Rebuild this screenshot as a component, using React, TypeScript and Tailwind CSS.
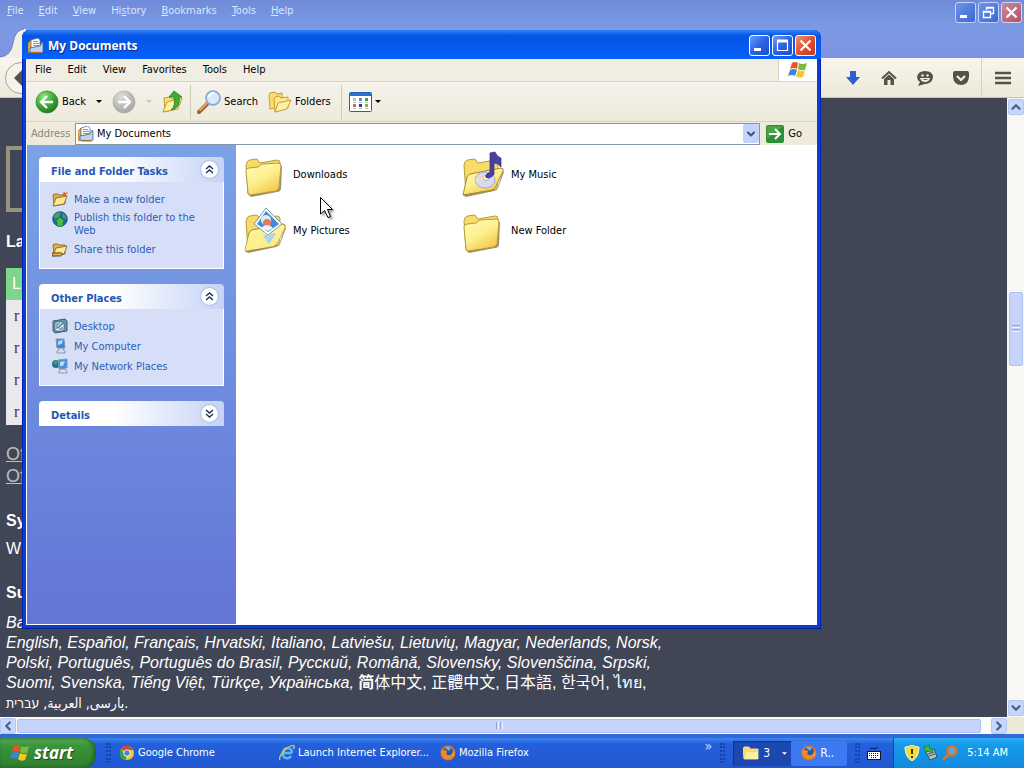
import React from 'react';
import { ChevronDown, ChevronLeft, ChevronRight, ChevronUp } from 'lucide-react';

const FolderShape: React.FC<{ open?: boolean }> = ({ open }) => (
  <>
    {open ? (
      <path d="M5 44 L8 43 L39 38 L45 20 L46 21 L40 37 Q39 39 36 40 L8 46Z" fill="#6f6030" opacity="0.7" />
    ) : (
      <path d="M8 43 L39 38 L40 14 L42 15 L41 38 Q40 41 37 41 L11 46Z" fill="#6f6030" opacity="0.7" />
    )}
    <path d="M6 14 L7 11 Q8 9 10 9 L16 8 Q18 8 19 11 L20 12 L37 9 Q40 9 40 12 L39 38 L8 43 Z" fill="#f8dc6a" stroke="#b99a3a" />
    {open ? (
      <path d="M5 44 L9 26 Q10 24 12 23 L43 17 Q46 17 45 20 L38 35 Q37 38 34 39 Z" fill="url(#folderFront)" stroke="#a88a2c" />
    ) : (
      <path d="M6 20 Q6 17 9 17 L18 16 L22 13 L38 12 Q41 12 41 15 L39 37 Q38 39 36 40 L10 44 Q8 44 8 42 Z" fill="url(#folderFront)" stroke="#b99a3a" />
    )}
  </>
);

const FolderIcon: React.FC<{ kind: string }> = ({ kind }) => (
  <svg viewBox="0 0 48 48" className="size-12 shrink-0">
    <defs>
      <linearGradient id="folderFront" x1="0" y1="0" x2="0.6" y2="1">
        <stop offset="0" stopColor="#fffab8" />
        <stop offset="0.55" stopColor="#fdf090" />
        <stop offset="1" stopColor="#f1c94c" />
      </linearGradient>
    </defs>
    <FolderShape open={kind !== 'plain'} />
    {kind === 'music' && (
      <>
        <ellipse cx="27" cy="29" rx="10" ry="8" fill="#d7daf0" stroke="#a8acd0" />
        <ellipse cx="28" cy="27" rx="3" ry="2.5" fill="#fbfbff" stroke="#a8acd0" />
        <path d="M14 29 L42 20 L40 23 L20 31Z" fill="#f9e884" opacity="0.6" />
        <path d="M32 22 V2 L37 1 Q39 6 43 7 V16 Q40 12 36 12 V23 Q35 26 30 27 Q27 27 28 24 Q30 21 32 22Z" fill="#4a41a0" stroke="#302878" strokeWidth="0.7" />
      </>
    )}
    {kind === 'pictures' && (
      <>
        <path d="M26 1 L42 17 L28 28 L14 17Z" fill="#fff" stroke="#7795ad" />
        <path d="M26 4 L39 17 L28 25 L17 17Z" fill="#3f8fd0" />
        <circle cx="26" cy="13" r="5" fill="#e5ecf4" />
        <circle cx="27" cy="16" r="4" fill="#df7c62" />
        <path d="M21 21 Q27 15 33 21 L28 24Z" fill="#f0f2f6" />
        <path d="M5 44 L9 28 L24 25 L29 30 L39 22 L45 20 L38 35 L34 39Z" fill="#fdf090" opacity="0.9" />
        <path d="M23 29 Q26 26 29 29 Q33 24 36 27 L29 37Z" fill="#a9d6ec" />
      </>
    )}
  </svg>
);

const DocumentsIcon: React.FC = () => (
  <svg viewBox="0 0 16 16" className="size-4 shrink-0">
    <path d="M0 5 L3 2 V13 L1 15 Q0 15 0 13Z" fill="#f4b33e" stroke="#a05c1c" strokeWidth="0.7" />
    <path d="M3 2 L10 0 L12 2 V10 H3Z" fill="#fff" stroke="#56769f" strokeWidth="0.8" />
    <path d="M5 3.500 H10 M5 5.500 H11 M5 7.500 H11" stroke="#6a9ade" />
    <path d="M2 10 L12 8 L14 4 Q15 4 15 6 V13 Q15 15 13 15 H4 Q2 15 2 13Z" fill="#bcd4f4" stroke="#4a607e" strokeWidth="0.8" />
    <path d="M3 14.500 H13" stroke="#b56f24" strokeWidth="1.2" />
  </svg>
);

const WindowsFlag: React.FC<{ className: string }> = ({ className }) => (
  <svg viewBox="0 0 20 18" className={className}>
    <path d="M4 2 Q7 0 10 2 L9 8 Q6 6 2 8Z" fill="#e8542c" />
    <path d="M11 2 Q14 4 19 2 L17 9 Q13 10 10 8Z" fill="#7dbb3c" />
    <path d="M2 9 Q6 7 9 9 L7 15 Q4 13 0 15Z" fill="#3e83e0" />
    <path d="M10 9 Q13 11 17 10 L15 16 Q11 18 8 15Z" fill="#f7c52c" />
  </svg>
);

const RoundArrow: React.FC<{ back?: boolean }> = ({ back }) => (
  <svg viewBox="0 0 24 24" className="size-6 shrink-0">
    <defs>
      <radialGradient id="greenBall" cx="0.35" cy="0.25" r="0.8">
        <stop offset="0" stopColor="#8fe07c" />
        <stop offset="0.6" stopColor="#3aa535" />
        <stop offset="1" stopColor="#20761f" />
      </radialGradient>
      <radialGradient id="grayBall" cx="0.35" cy="0.25" r="0.8">
        <stop offset="0" stopColor="#dcdcda" />
        <stop offset="1" stopColor="#a5a5a2" />
      </radialGradient>
    </defs>
    {back ? (
      <>
        <circle cx="12" cy="12" r="11" fill="url(#greenBall)" stroke="#2c8a2a" strokeWidth="0.7" />
        <path d="M18 12 H7 M12 6 L6 12 L12 18" fill="none" stroke="#fff" strokeWidth="2.4" />
      </>
    ) : (
      <>
        <circle cx="12" cy="12" r="11" fill="url(#grayBall)" stroke="#a9a9a6" strokeWidth="0.7" />
        <path d="M6 12 H17 M12 6 L18 12 L12 18" fill="none" stroke="#fff" strokeWidth="2.4" />
      </>
    )}
  </svg>
);

const Caret: React.FC<{ className: string }> = ({ className }) => (
  <svg viewBox="0 0 6 3" className={className}>
    <path d="M0 0 H6 L3 3Z" fill="currentColor" />
  </svg>
);

const UpFolderIcon: React.FC = () => (
  <svg viewBox="0 0 22 24" className="h-6 w-[22px] shrink-0">
    <path d="M2 8 L8 7 L10 9 L16 8 V18 L3 22Z" fill="#f7df72" stroke="#c59c31" />
    <path d="M1 22 L5 12 L20 8 L16 19Z" fill="#fdf2a0" stroke="#c59c31" />
    <path d="M9 20 Q14 16 12 7 H7 L12 1 L20 7 L17 7 Q19 18 9 20Z" fill="#3fae35" stroke="#1d7a22" strokeWidth="0.8" />
  </svg>
);

const SearchIcon: React.FC = () => (
  <svg viewBox="0 0 24 24" className="size-6 shrink-0">
    <path d="M10 14 L2 22" stroke="#9b6235" strokeWidth="4" strokeLinecap="round" />
    <path d="M10 13 L3 20" stroke="#e6a266" strokeWidth="2" strokeLinecap="round" />
    <circle cx="16" cy="8" r="7" fill="#d4eafd" stroke="#8aa7d8" strokeWidth="1.7" />
    <path d="M12 7 Q13 3 17 3" stroke="#fff" strokeWidth="2" fill="none" />
  </svg>
);

const FoldersIcon: React.FC = () => (
  <svg viewBox="0 0 24 24" className="size-6 shrink-0">
    <path d="M1 5 L2 3 L7 2 L9 4 L14 3 V16 L2 19Z" fill="#f8dd72" stroke="#cf9c2e" />
    <path d="M6 9 L7 7 L11 6 L13 8 L20 7 V18 L7 22Z" fill="#fbe98b" stroke="#cf9c2e" />
    <path d="M7 22 L10 13 L23 10 L19 19Z" fill="#fdf3a8" stroke="#cf9c2e" />
  </svg>
);

const ViewsIcon: React.FC = () => (
  <svg viewBox="0 0 23 20" className="h-5 w-[23px] shrink-0">
    <rect x="0.5" y="0.5" width="22" height="19" rx="1" fill="#fff" stroke="#1c62c0" />
    <rect x="1" y="1" width="21" height="3" fill="#2a70d4" />
    <rect x="4" y="6" width="3" height="3" fill="#aac0dc" />
    <rect x="10" y="6" width="3" height="3" fill="#5b8cc8" />
    <rect x="16" y="6" width="3" height="3" fill="#3c9a4a" />
    <rect x="4" y="12" width="3" height="3" fill="#d7654c" />
    <rect x="10" y="12" width="3" height="3" fill="#27409c" />
    <rect x="16" y="12" width="3" height="3" fill="#a9a632" />
    <path d="M4 10.500h3M10 10.500h3M16 10.500h3M4 16.500h3M10 16.500h3M16 16.500h3" stroke="#b5c0d2" />
  </svg>
);

const TaskIcon: React.FC<{ kind: string }> = ({ kind }) => (
  <svg viewBox="0 0 16 16" className="size-4 shrink-0">
    {(kind === 'new' || kind === 'share') && (
      <>
        <path d="M1 4 L2 3 H6 L7 4 H13 V13 L2 15Z" fill="#e3b043" stroke="#80601f" strokeWidth="0.8" />
        <path d="M1 15 L4 7 L15 5 L12 13Z" fill="#fcea94" stroke="#80601f" strokeWidth="0.8" />
      </>
    )}
    {kind === 'new' && <path d="M12 0 L13 2 L16 1 L14 4 L15 6 L12 4 L9 4 L11 3Z" fill="#e8622c" />}
    {kind === 'share' && <path d="M0 12 H5 Q7 11 9 12 L11 13 Q9 16 5 15 H0Z" fill="#e0aa58" stroke="#3b3320" strokeWidth="0.8" />}
    {kind === 'web' && (
      <>
        <circle cx="8" cy="8" r="7.500" fill="#23629c" stroke="#1f4f78" strokeWidth="0.5" />
        <path d="M2 5 Q5 0 9 2 L7 6 L3 8Z M10 2 Q14 4 14 8 L11 7Z" fill="#45a851" />
        <path d="M8 6 L13 11 H11 V15 H5 V11 H3Z" fill="#43c03c" stroke="#1d7a2c" strokeWidth="0.7" />
      </>
    )}
    {kind === 'desktop' && (
      <>
        <path d="M1 3 L13 1 L15 3 V13 L3 15 L1 13Z" fill="#6c97a8" stroke="#2c5064" strokeWidth="0.9" />
        <rect x="3" y="4" width="9" height="9" rx="2" fill="#eaf5fa" stroke="#2f6376" strokeWidth="0.8" />
        <path d="M5 11 V6 H8 M6 10 L11 5 M7 11 H10 V9" stroke="#2e6b88" strokeWidth="1.1" fill="none" />
      </>
    )}
    {kind === 'computer' && (
      <>
        <path d="M4 1 L12 1 L13 10 L5 10Z" fill="#3b86dc" stroke="#8199b8" />
        <path d="M6 3 L11 2 L10 6 L6 7Z" fill="#a8dcfc" />
        <path d="M7 10h4v2l2 1v2H5v-2l2-1Z" fill="#dadfe4" stroke="#6b7d94" strokeWidth="0.7" />
      </>
    )}
    {kind === 'network' && (
      <>
        <circle cx="4" cy="6" r="4" fill="#226ca4" />
        <path d="M1 5 Q3 1 6 3 L4 7Z" fill="#41a84c" />
        <path d="M6 2 L15 1 V10 L7 11Z" fill="#4292e2" stroke="#8199b8" />
        <path d="M8 4 L13 3 L11 8 L8 8Z" fill="#b4e0fc" />
        <path d="M9 11h3l3 2v2H7v-2Z" fill="#dadfe4" stroke="#6b7d94" strokeWidth="0.7" />
      </>
    )}
  </svg>
);

const FirefoxIcon: React.FC = () => (
  <svg viewBox="0 0 16 16" className="size-4 shrink-0">
    <circle cx="8" cy="8" r="7.500" fill="#e6701c" />
    <circle cx="8" cy="7" r="5" fill="#2458a0" />
    <path d="M5 3 Q8 0 11 3 L9 6Z" fill="#62b4e4" />
    <path d="M1 4 Q2 6 4 5 Q7 5 7 7 Q5 9 8 10 Q12 11 13 6 Q15 12 9 14 Q2 14 1 8Z" fill="#f08a24" />
    <path d="M13 4 Q16 9 12 13 Q15 8 13 4Z" fill="#fbd04a" />
  </svg>
);

const WindowButton: React.FC<{ kind: string; faded?: boolean }> = ({ kind, faded }) => (
  <button
    aria-label={kind}
    className={`size-[21px] shrink-0 rounded-[3px] border flex items-center justify-center ${
      kind === 'Close'
        ? faded
          ? 'border-[#d8d4ec] bg-linear-to-br from-[#c98a9c] to-[#b35064]'
          : 'border-white bg-linear-to-br from-[#ee9079] via-[#e0502c] to-[#c53a18]'
        : faded
          ? 'border-[#c3d2f6] bg-linear-to-br from-[#6f93ea] to-[#3c66d4]'
          : 'border-white bg-linear-to-br from-[#6f9bf5] via-[#2d62e4] to-[#1a4bd0]'
    }`}
  >
    <svg viewBox="0 0 19 19" className="size-[19px]">
      {kind === 'Minimize' && <path d="M4 13.500 H11" stroke="#fff" strokeWidth="3" />}
      {kind === 'Maximize' && <path d="M4 5 H15 M4.500 4 V14.500 H14.500 V4" fill="none" stroke="#fff" strokeWidth="1.2" />}
      {kind === 'Maximize' && <path d="M4 5 H15" stroke="#fff" strokeWidth="3" />}
      {kind === 'Restore' && <path d="M7.500 7 V4.500 H14.500 V10.500 H12 M4.500 8.500 H11.500 V14.500 H4.500Z M4 9 H12 M7 5 H15" fill="none" stroke="#fff" strokeWidth="1.3" />}
      {kind === 'Close' && <path d="M4.500 4.500 L14.500 14.500 M14.500 4.500 L4.500 14.500" stroke="#fff" strokeWidth="2.3" />}
    </svg>
  </button>
);

const scrollButton = 'size-4 shrink-0 rounded-[2px] border border-[#b4c6f2] bg-[#c8d6fb] text-[#4d6185] flex items-center justify-center';

const firefoxMenu = ['File', 'Edit', 'View', 'History', 'Bookmarks', 'Tools', 'Help'];
const explorerMenu = ['File', 'Edit', 'View', 'Favorites', 'Tools', 'Help'];

const files = [
  { name: 'Downloads', kind: 'plain' },
  { name: 'My Music', kind: 'music' },
  { name: 'My Pictures', kind: 'pictures' },
  { name: 'New Folder', kind: 'plain' },
];

const panels = [
  {
    title: 'File and Folder Tasks',
    items: [
      { label: 'Make a new folder', kind: 'new' },
      { label: 'Publish this folder to the Web', kind: 'web' },
      { label: 'Share this folder', kind: 'share' },
    ],
  },
  {
    title: 'Other Places',
    items: [
      { label: 'Desktop', kind: 'desktop' },
      { label: 'My Computer', kind: 'computer' },
      { label: 'My Network Places', kind: 'network' },
    ],
  },
  { title: 'Details', items: [] },
];

const FirefoxWindow: React.FC = () => (
  <div className="flex-1 min-h-0 flex flex-col">
    <header className="h-[58px] shrink-0 flex items-start justify-between bg-linear-to-b from-[#6f8bd9] via-[#7c9ae6] to-[#7f92e2]">
      <div className="self-stretch flex flex-col justify-between">
        <nav className="flex gap-[15px] pl-[7px] pt-1 text-[#d9e6fc]">
          {firefoxMenu.map((item) => (
            <button key={item} className="leading-[13px]">
              {item === 'History' ? (
                <>Hi<u>s</u>tory</>
              ) : (
                <><u>{item[0]}</u>{item.slice(1)}</>
              )}
            </button>
          ))}
        </nav>
        <svg viewBox="0 0 26 30" className="w-[26px] h-[30px]">
          <path d="M0 29 Q11 28 13 15 Q15 2 24 1 H26 V30 H0Z" fill="#f2f0e6" />
          <path d="M0 29 Q11 28 13 15 Q15 2 24 1" fill="none" stroke="#6d82c0" />
        </svg>
      </div>
      <div className="flex gap-0.5 pt-0.5 pr-0.5">
        <WindowButton kind="Minimize" faded />
        <WindowButton kind="Restore" faded />
        <WindowButton kind="Close" faded />
      </div>
    </header>

    <div className="h-10 shrink-0 border-b border-[#c9c5b4] bg-linear-to-b from-[#f7f5ee] to-[#ece9d8] flex items-center justify-between text-[#55524a]">
      <button aria-label="Go back" className="ml-[5px] size-8 rounded-full border border-[#a9a698] bg-[#f5f3ea] flex items-center pl-2">
        <svg viewBox="0 0 12 16" className="w-3 h-4"><path d="M0 8 L8 0 H12 V16 H8Z" fill="#55524a" /></svg>
      </button>
      <div className="flex items-center self-stretch">
        <button aria-label="Downloads" className="w-9 flex justify-center">
          <svg viewBox="0 0 16 16" className="size-4"><path d="M5 1 H11 V7 H15 L8 15 L1 7 H5Z" fill="#2f5fce" /></svg>
        </button>
        <button aria-label="Home" className="w-9 flex justify-center">
          <svg viewBox="0 0 16 16" className="size-4">
            <path d="M1 8.500 L8 2 L15 8.500" fill="none" stroke="#55524a" strokeWidth="2" />
            <path d="M3 9 L8 4.500 L13 9 V15 H9.500 V10 H6.500 V15 H3Z" fill="#55524a" />
          </svg>
        </button>
        <button aria-label="Chat" className="w-9 flex justify-center">
          <svg viewBox="0 0 16 16" className="size-4">
            <path d="M8 1 Q16 1 16 7.500 Q15 14 8 14 L1 16 L3 12 Q0 10 0 7 Q1 1 8 1Z" fill="#55524a" />
            <circle cx="5.500" cy="5.500" r="1.2" fill="#f3f1e6" /><circle cx="10.500" cy="5.500" r="1.2" fill="#f3f1e6" />
            <path d="M3 8 H13 Q12 12 8 12 Q4 12 3 8Z M5 9 H11 Q10 10 8 10Z" fill="#f3f1e6" fillRule="evenodd" />
          </svg>
        </button>
        <button aria-label="Pocket" className="w-9 mr-0.5 flex justify-center">
          <svg viewBox="0 0 16 16" className="size-4">
            <path d="M0 3 Q0 1 2 1 H14 Q16 1 16 3 V7 Q15 15 8 15 Q1 15 0 7Z" fill="#55524a" />
            <path d="M4 6 L8 10 L12 6" fill="none" stroke="#f3f1e6" strokeWidth="2.2" />
          </svg>
        </button>
        <button aria-label="Menu" className="w-[43px] self-stretch border-l border-[#d5d1c2] flex items-center justify-center">
          <svg viewBox="0 0 16 14" className="w-4 h-3.5"><path d="M0 2 H16 M0 7 H16 M0 12 H16" stroke="#55524a" strokeWidth="2.6" /></svg>
        </button>
      </div>
    </div>

    <div className="flex-1 min-h-0 flex">
      <main className="flex-1 min-w-0 overflow-hidden bg-[#414656] pl-1.5 text-base leading-5 text-white font-['Liberation_Sans','Noto_Sans_CJK_SC','Noto_Sans_CJK_KR',sans-serif]">
        <div className="mt-12 w-40 h-[66px] border-4 border-[#97937f]" />
        <h2 className="mt-5 font-bold">La</h2>
        <div className="mt-4 w-40 h-8 bg-[#7dd68c] pl-1.5 leading-8">L</div>
        <ul className="w-40 h-[125px] overflow-hidden bg-[#e9e9ed] pl-2 text-[#5b1f5c] leading-8 font-['Liberation_Serif',serif]">
          <li>r</li>
          <li>r</li>
          <li>r</li>
          <li>r</li>
        </ul>
        <div className="mt-[18px] flex flex-col items-start text-lg leading-[22px] text-[#c3bdb7]">
          <a href="#one" className="underline">Of</a>
          <a href="#two" className="underline">Of</a>
        </div>
        <h2 className="mt-6 font-bold">Sy</h2>
        <p className="mt-2">W</p>
        <h2 className="mt-6 font-bold">Su</h2>
        <p className="mt-2.5 italic">
          Ba<br />
          English, Español, Français, Hrvatski, Italiano, Latviešu, Lietuvių, Magyar, Nederlands, Norsk,<br />
          Polski, Português, Português do Brasil, Русский, Română, Slovensky, Slovenščina, Srpski,<br />
          Suomi, Svenska, Tiếng Việt, Türkçe, Українська, <span className="not-italic"><b>简</b>体中文, 正體中文, 日本語, 한국어, ไทย,</span><br />
          <span className="not-italic text-sm leading-5 font-['DejaVu_Sans_Condensed',sans-serif]">پارسی, العربية, עברית.</span>
        </p>
      </main>
      <div className="w-[17px] shrink-0 bg-[#f7f7f3] flex flex-col items-center py-px">
        <button aria-label="Scroll up" className={scrollButton}><ChevronUp className="size-3.5" strokeWidth={4} /></button>
        <div className="grow-[176] basis-0" />
        <div className="grow-[72] basis-0 w-3.5 rounded-[2px] border border-[#aec0ee] bg-[#c6d3fa] flex flex-col items-center justify-center gap-px">
          <i className="w-2 h-px bg-[#8ea6dc]" />
          <i className="w-2 h-px bg-[#eef3ff]" />
          <i className="w-2 h-px bg-[#8ea6dc]" />
          <i className="w-2 h-px bg-[#eef3ff]" />
        </div>
        <div className="grow-[333] basis-0" />
        <button aria-label="Scroll down" className={scrollButton}><ChevronDown className="size-3.5" strokeWidth={4} /></button>
      </div>
    </div>
    <div className="h-[17px] shrink-0 bg-[#ece9d8] flex">
      <div className="flex-1 bg-[#fbfbf9] flex items-center">
        <button aria-label="Scroll left" className={scrollButton}><ChevronLeft className="size-3.5" strokeWidth={4} /></button>
        <div className="ml-px mr-2.5 flex-1 h-[14px] rounded-[2px] border border-[#aec0ee] bg-[#c6d3fa] flex items-center justify-center gap-px">
          <i className="w-px h-[7px] bg-[#8ea6dc]" />
          <i className="w-px h-[7px] bg-[#eef3ff]" />
          <i className="w-px h-[7px] bg-[#8ea6dc]" />
          <i className="w-px h-[7px] bg-[#eef3ff]" />
        </div>
        <button aria-label="Scroll right" className={scrollButton}><ChevronRight className="size-3.5" strokeWidth={4} /></button>
      </div>
      <div className="w-[17px]" />
    </div>
  </div>
);

const ExplorerWindow: React.FC = () => (
  <section className="absolute left-[22px] top-[30px] right-[203px] bottom-[139px] rounded-t-lg bg-[#0a3fd0] border-b border-[#001c98] px-1 pb-[3px] flex flex-col shadow-[inset_1px_0_0_#0020b8,inset_-1px_0_0_#0020b8]">
    <div className="h-[29px] shrink-0 -mx-1 rounded-t-lg bg-linear-to-b from-[#2e85f8] from-0% via-[#0654e4] via-20% to-[#0560fb] flex items-center pl-1.5 pr-[5px] pt-0.5">
      <DocumentsIcon />
      <h1 className="ml-1 flex-1 text-xs font-bold text-white font-['Open_Sans',sans-serif] [text-shadow:1px_1px_0_#0a2a8c]">My Documents</h1>
      <div className="flex gap-0.5">
        <WindowButton kind="Minimize" />
        <WindowButton kind="Maximize" />
        <WindowButton kind="Close" />
      </div>
    </div>

    <div className="h-[23px] shrink-0 bg-[#f0eee3] border-b border-[#d8d4c4] flex items-center justify-between">
      <nav className="flex gap-4 pl-[9px]">
        {explorerMenu.map((item) => (
          <button key={item}>{item}</button>
        ))}
      </nav>
      <div className="w-[39px] h-full bg-white border-l border-[#d8d4c4] flex items-center justify-center">
        <WindowsFlag className="w-5 h-[18px]" />
      </div>
    </div>

    <div className="h-10 shrink-0 bg-linear-to-b from-[#f4f2ea] to-[#eeebdc] border-b border-[#d8d4c4] flex items-center pl-[9px]">
      <button className="flex items-center gap-[3px]"><RoundArrow back />Back</button>
      <button aria-label="Back history" className="ml-2.5"><Caret className="w-1.5 h-[3px]" /></button>
      <button aria-label="Forward" className="ml-2.5"><RoundArrow /></button>
      <button aria-label="Forward history" className="ml-2.5 text-[#c5c2b8]"><Caret className="w-1.5 h-[3px]" /></button>
      <button aria-label="Up" className="ml-2.5"><UpFolderIcon /></button>
      <div className="ml-1.5 h-[34px] w-px bg-[#cfcbbb]" />
      <button className="ml-1.5 flex items-center gap-[3px]"><SearchIcon />Search</button>
      <button className="ml-2.5 flex items-center gap-[3px]"><FoldersIcon />Folders</button>
      <div className="ml-2.5 h-[34px] w-px bg-[#cfcbbb]" />
      <button aria-label="Views" className="ml-[7px] flex items-center gap-[3px]"><ViewsIcon /><Caret className="w-1.5 h-[3px]" /></button>
    </div>

    <form className="h-[23px] shrink-0 bg-[#eeebdc] flex items-center pl-[5px] pr-[15px]" onSubmit={(e) => e.preventDefault()}>
      <label htmlFor="address" className="w-11 text-[#8a887d]">Address</label>
      <div className="flex-1 h-[22px] bg-white border border-[#8296ac] flex items-center gap-[3px] pl-0.5">
        <DocumentsIcon />
        <input id="address" defaultValue="My Documents" className="flex-1 min-w-0 outline-none" />
        <button type="button" aria-label="Show addresses" className="w-4 h-[19px] rounded-[2px] bg-[#c3d3fb] text-[#3d517c] flex items-center justify-center">
          <ChevronDown className="size-3" strokeWidth={4} />
        </button>
      </div>
      <button className="ml-1.5 flex items-center gap-1">
        <svg viewBox="0 0 18 18" className="size-[18px]">
          <rect width="18" height="18" rx="2" fill="#2d8f35" />
          <path d="M1 1 H17 L1 14Z" fill="#58b354" opacity="0.6" />
          <path d="M3 9 H14 M9 4 L14 9 L9 14" fill="none" stroke="#fff" strokeWidth="2" />
        </svg>
        Go
      </button>
    </form>

    <div className="flex-1 min-h-0 flex bg-white border-l border-b border-white">
      <aside className="w-[209px] shrink-0 bg-linear-to-b from-[#7ba2e7] to-[#6375d6] px-3 pt-3 flex flex-col gap-[15px]">
        {panels.map((panel) => (
          <div key={panel.title}>
            <div className="h-[25px] rounded-t bg-linear-to-r from-white from-40% to-[#c6d3f7] pl-3 pr-1.5 flex items-center justify-between">
              <h2 className="font-bold text-[#2457b4] pt-1">{panel.title}</h2>
              <button aria-label={'Toggle ' + panel.title} className="size-[17px] rounded-full bg-white shadow-[0_0_2px_#7488b8] flex items-center justify-center">
                <svg viewBox="0 0 9 9" className="size-[9px]">
                  {panel.items.length > 0 ? (
                    <path d="M1 4 L4.500 1 L8 4 M1 8 L4.500 5 L8 8" fill="none" stroke="#1c2f60" strokeWidth="1.4" />
                  ) : (
                    <path d="M1 1 L4.500 4 L8 1 M1 5 L4.500 8 L8 5" fill="none" stroke="#1c2f60" strokeWidth="1.4" />
                  )}
                </svg>
              </button>
            </div>
            {panel.items.length > 0 && (
              <ul className="border border-t-0 border-white bg-[#d6dff7] pl-3 pr-5 pt-[9px] pb-[11px] flex flex-col gap-1">
                {panel.items.map((item) => (
                  <li key={item.label} className="flex items-start gap-1.5">
                    <TaskIcon kind={item.kind} />
                    <a href="#task" className="min-h-4 flex items-center leading-[13px] text-[#2c5cb8]">{item.label}</a>
                  </li>
                ))}
              </ul>
            )}
          </div>
        ))}
      </aside>
      <ul className="flex-1 grid grid-cols-[repeat(auto-fill,218px)] content-start gap-y-2 pl-1 pt-1.5">
        {files.map((file) => (
          <li key={file.name} className="flex items-center gap-[5px]">
            <FolderIcon kind={file.kind} />
            <span>{file.name}</span>
          </li>
        ))}
      </ul>
    </div>
  </section>
);

const Grip: React.FC<{ className: string }> = ({ className }) => (
  <div className={`${className} w-[5px] h-5 shrink-0 border-x-2 border-dotted border-[#1743a8]`} />
);

const Taskbar: React.FC = () => (
  <footer className="h-[34px] shrink-0 border-t-4 border-[#3369d6] bg-linear-to-b from-[#3f86f0] from-0% via-[#245fdc] via-20% to-[#2158d2] flex items-center text-white">
    <button className="w-24 h-full shrink-0 rounded-r-xl bg-linear-to-b from-[#5cae5a] from-0% via-[#3b943a] via-25% to-[#2f7f30] flex items-center gap-1 pl-2.5 shadow-[inset_-2px_0_4px_#1d5c20]">
      <WindowsFlag className="w-5 h-[18px]" />
      <span className="text-[17px] leading-6 font-bold italic font-['Open_Sans',sans-serif] [text-shadow:1px_1px_1px_#1b4a1c]">start</span>
    </button>
    <Grip className="ml-2.5" />
    <button className="ml-2 w-[160px] flex items-center gap-[3px]">
      <svg viewBox="0 0 16 16" className="size-4 shrink-0">
        <circle cx="8" cy="8" r="7" fill="#e9c93a" />
        <path d="M8 8 L2 4 Q8 -3 14.500 5 H8Z" fill="#d9432f" />
        <path d="M2 4 L7 12 L7 15 Q-2 13 2 4Z" fill="#3f9e4b" />
        <circle cx="8" cy="8" r="3.500" fill="#fff" />
        <circle cx="8" cy="8" r="2.700" fill="#4482e0" />
      </svg>
      Google Chrome
    </button>
    <button className="w-[161px] flex items-center gap-[3px] whitespace-nowrap">
      <svg viewBox="0 0 16 16" className="size-4 shrink-0">
        <path d="M13 8 H4 M12 11 Q10 14 7 13 Q3 12 4 7 Q5 3 9 3 Q13 4 13 8" fill="none" stroke="#58b8f4" strokeWidth="2.4" />
        <path d="M1 15 Q-1 12 6 5 Q13 -1 15 1 Q16 2 14 4" fill="none" stroke="#f0cc48" strokeWidth="1.2" />
      </svg>
      Launch Internet Explorer...
    </button>
    <button className="flex items-center gap-[3px]"><FirefoxIcon />Mozilla Firefox</button>
    <button aria-label="More shortcuts" className="ml-auto mr-2 self-start text-sm leading-4 text-[#c8dcfc]">»</button>
    <Grip className="mr-2" />
    <button className="w-[58px] h-[25px] bg-[#1c48b0] shadow-[inset_1px_1px_1px_#12338a] flex items-center pl-2.5">
      <svg viewBox="0 0 16 14" className="w-4 h-3.5"><path d="M0 3 L1 1 H6 L7 3 H15 V13 H1Z" fill="#f8d868" stroke="#fff2b0" strokeWidth="0.8" /><path d="M3 6 H15 V13 H2Z" fill="#fdf09c" /></svg>
      <span className="ml-1 text-xs">3</span>
      <Caret className="ml-auto mr-1 w-[5px] h-[3px]" />
    </button>
    <button className="w-14 h-[25px] rounded-[2px] bg-[#3b7af0] flex items-center gap-[3px] pl-2.5"><FirefoxIcon /><span className="text-xs">R..</span></button>
    <Grip className="ml-2" />
    <button aria-label="Keyboard" className="ml-[7px]">
      <svg viewBox="0 0 14 14" className="size-3.5">
        <path d="M3 3 Q6 1 7 3 Q9 3 11 1" fill="none" stroke="#101828" />
        <rect x="0.500" y="5.500" width="13" height="8" fill="#fff" stroke="#101828" />
        <path d="M2 7.500 H12 M2 9.500 H12 M4 11.500 H10" stroke="#101828" strokeDasharray="1 1" />
      </svg>
    </button>
    <div className="ml-3 h-full border-l border-[#0c48a8] bg-linear-to-b from-[#2fb0f6] from-0% via-[#159bea] via-20% to-[#1289dc] flex items-center gap-[3px] pl-2.5 pr-4">
      <svg viewBox="0 0 16 16" className="size-4">
        <path d="M8 0 Q11 2 15 2 Q15 12 8 16 Q1 12 1 2 Q5 2 8 0Z" fill="#f5dc38" stroke="#f5f5e0" />
        <path d="M8 4 V9 M8 11 V13" stroke="#3c3410" strokeWidth="2" />
      </svg>
      <svg viewBox="0 0 16 16" className="size-4">
        <path d="M3 7 L11 4 L14 12 L7 15Z" fill="#b9c4cc" stroke="#3f4d58" />
        <path d="M5 9 L11 7 M6 11 L12 9" stroke="#3f4d58" />
        <path d="M1 2 L7 0 L6 3 Q10 4 10 8 L4 6 L3 8Z" fill="#46b93c" stroke="#21702a" strokeWidth="0.6" />
      </svg>
      <svg viewBox="0 0 16 16" className="size-4">
        <circle cx="10" cy="6" r="4.500" fill="#58a8dc" stroke="#e8701c" strokeWidth="2.500" />
        <path d="M6 10 L1 15" stroke="#e8701c" strokeWidth="2.600" />
      </svg>
      <time className="ml-1.5 whitespace-nowrap">5:14 AM</time>
    </div>
  </footer>
);

export default function App() {
  return (
    <div className="relative h-screen overflow-hidden flex flex-col text-[11px] leading-[14px] text-black font-['DejaVu_Sans_Condensed','DejaVu_Sans',sans-serif]">
      <FirefoxWindow />
      <Taskbar />
      <ExplorerWindow />
      <svg viewBox="0 0 14 22" className="absolute left-[320px] top-[197px] w-3.5 h-[22px] drop-shadow-[2px_2px_1px_rgba(0,0,0,0.35)]">
        <path d="M0.500 0.500 V17 L4.500 13.500 L8 20.500 L10.500 19.500 L7.500 12.500 H12.500Z" fill="#fff" stroke="#000" />
      </svg>
    </div>
  );
}
